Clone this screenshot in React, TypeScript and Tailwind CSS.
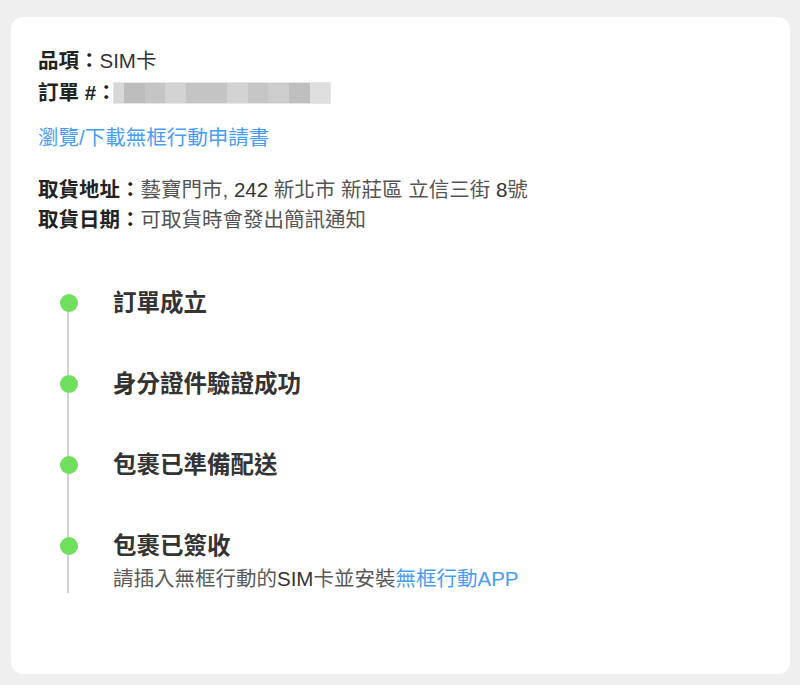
const blur = [
  { w: 10, c: "bg-[#d8d8d8]" },
  { w: 21, c: "bg-[#bdbdbd]" },
  { w: 20, c: "bg-[#c5c5c5]" },
  { w: 21, c: "bg-[#d3d3d3]" },
  { w: 41, c: "bg-[#c4c4c4]" },
  { w: 21, c: "bg-[#d3d3d3]" },
  { w: 20, c: "bg-[#c6c6c6]" },
  { w: 21, c: "bg-[#cdcdcd]" },
  { w: 21, c: "bg-[#bebebe]" },
  { w: 20, c: "bg-[#dedede]" },
];

const steps = ["訂單成立", "身分證件驗證成功", "包裹已準備配送", "包裹已簽收"];

function App() {
  return (
    <div className="min-h-screen bg-[#efefef] pt-[17px] pb-[11px] pl-[11px] pr-[10px] font-['Liberation_Sans','Noto_Sans_CJK_TC',sans-serif]">
      <div className="bg-white rounded-[12px] pl-[27px] pt-[28px] pb-[81px]">
        <div className="text-[20.5px] leading-[32px] text-[#222]">
          <p>
            <b>品項：</b>
            <span className="text-[#333]">SIM卡</span>
          </p>
          <p className="flex items-center">
            <b>訂單 #：</b>
            <span className="flex h-[22px] -ml-[4px] border border-[#e6e6e6]">
              {blur.map((b, i) => (
                <span key={i} className={"h-full " + b.c} style={{ width: b.w }} />
              ))}
            </span>
          </p>
        </div>

        <a className="block mt-[14px] text-[20.5px] leading-[30px] text-[#4a9df5]">
          瀏覽/下載無框行動申請書
        </a>

        <div className="mt-[22px] text-[20.5px] leading-[30px] text-[#555]">
          <p>
            <b className="text-[#222]">取貨地址：</b>藝寶門市, <span className="text-[#333]">242</span> 新北市 新莊區 立信三街 <span className="text-[#333]">8</span>號
          </p>
          <p>
            <b className="text-[#222]">取貨日期：</b>可取貨時會發出簡訊通知
          </p>
        </div>

        <ul className="relative mt-[52px] pl-[22px]">
          <span className="absolute left-[29px] top-[16px] bottom-0 w-[2px] bg-[#d0d0d0]" />
          {steps.map((s, i) => (
            <li key={s} className={"relative flex gap-[35px] " + (i < steps.length - 1 ? "pb-[49px]" : "")}>
              <div className="h-[32px] flex items-center">
                <span className="block w-[18px] h-[18px] rounded-full bg-[#6fdf5c]" />
              </div>
              <div>
                <p className="text-[23.5px] leading-[32px] font-bold text-[#333]">{s}</p>
                {i === steps.length - 1 && (
                  <p className="mt-[3px] text-[20.5px] leading-[28px] text-[#5a5a5a]">
                    請插入無框行動的<span className="text-[#333]">SIM</span>卡並安裝
                    <span className="text-[#4a9df5]">無框行動APP</span>
                  </p>
                )}
              </div>
            </li>
          ))}
        </ul>
      </div>
    </div>
  );
}

export default App;
